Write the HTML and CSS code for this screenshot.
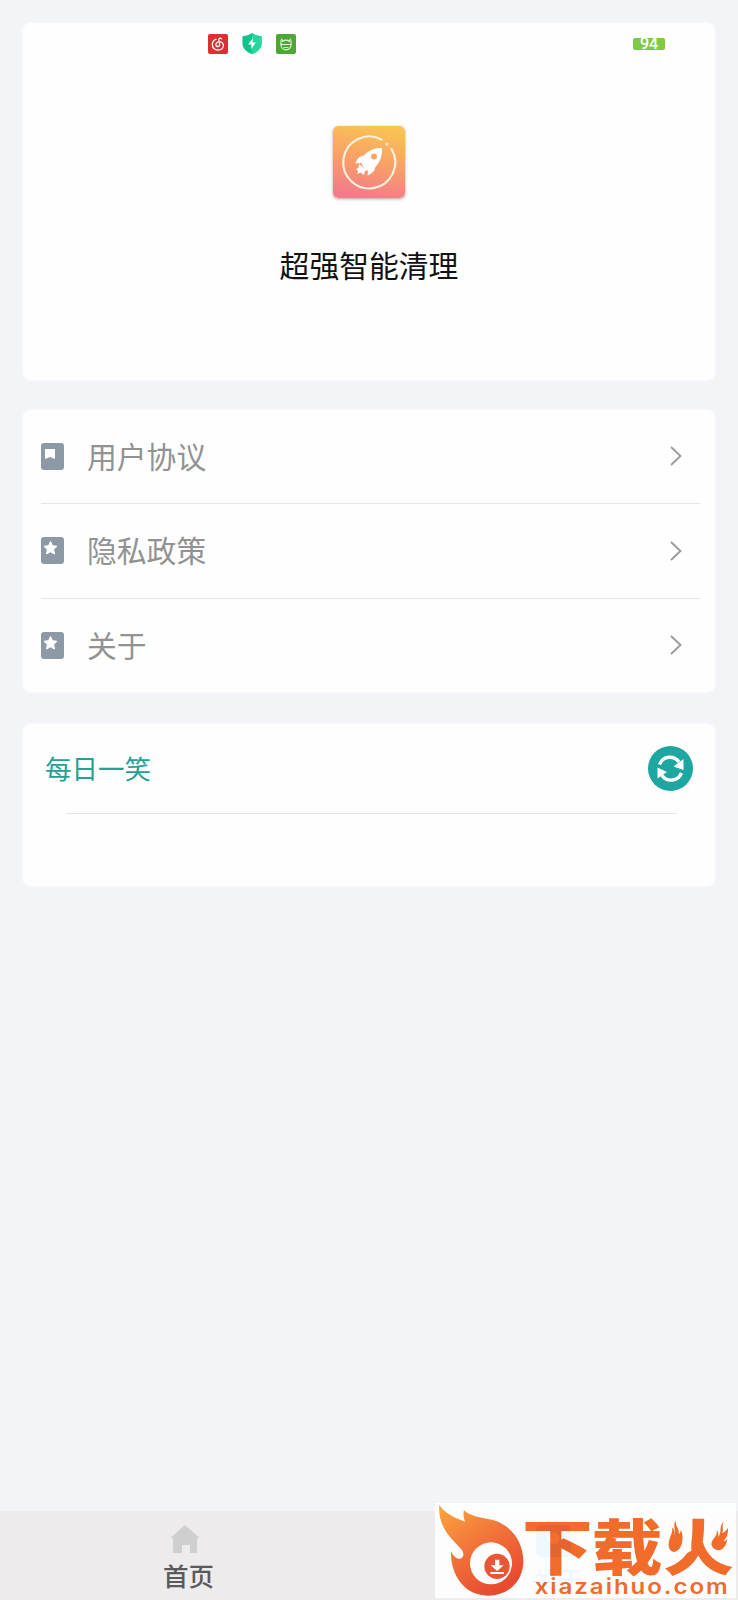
FILE: index.html
```
<!DOCTYPE html>
<html lang="zh-CN">
<head>
    <meta charset="UTF-8">
    <meta name="viewport" content="width=device-width, initial-scale=1.0">
    <title>超强智能清理</title>
    <link rel="stylesheet" href="styles.css">
</head>
<body>
    <main>
        <section class="card header">
            <div class="status-bar">
                <div class="status-icons">
                    <svg width="20" height="20" viewBox="0 0 20 20">
                        <rect width="20" height="20" rx="2" fill="#dc2f32"/>
                        <g fill="none" stroke="#fff" stroke-width="1.3" stroke-linecap="round">
                            <path d="M8 5.2C2.5 7.5 3.3 16 10 16c6.500 0 7.200-8 1.500-8.300C8 7.500 6.500 12 9.300 12.500c3.500.2 2.200-3 1.500-6.500-.2-1.800 1.500-2.300 2.700-1.300"/>
                        </g>
                    </svg>
                    <svg width="20" height="21" viewBox="0 0 20 22">
                        <path d="M10 0c3 2 6 3 10 3.300V11c0 5-4 9-10 11C4 20 0 16 0 11V3.300C4 3 7 2 10 0Z" fill="#12c48a"/>
                        <path d="M10 0c3 2 6 3 10 3.300V11c0 5-4 9-10 11Z" fill="#27d79c"/>
                        <path d="m11 5-5 7h3.500L9 17l5-7h-3.500Z" fill="#fff"/>
                    </svg>
                    <svg width="20" height="20" viewBox="0 0 20 20">
                        <rect width="20" height="20" rx="2" fill="#4fa637"/>
                        <g fill="none" stroke="#e4f6d8" stroke-width="1.100" stroke-linecap="round">
                            <path d="M5 10V6.500M15 10V6.500M6.500 7.500C8.500 6 11.500 6 13.500 7.500M5.500 5l1.500 2M14.500 5 13 7M4.500 10.500h11M5 11c0 6.500 10 6.500 10 0M8 13.500h4"/>
                        </g>
                    </svg>
                </div>
                <span class="battery">94</span>
            </div>
            <svg class="app-icon" width="72" height="72" viewBox="0 0 72 72">
                <defs>
                    <linearGradient id="app-bg" x1=".6" y1="0" x2=".4" y2="1">
                        <stop offset="0" stop-color="#f9c354"/>
                        <stop offset=".5" stop-color="#f9a067"/>
                        <stop offset="1" stop-color="#f27a8b"/>
                    </linearGradient>
                </defs>
                <rect width="72" height="72" rx="5" fill="url(#app-bg)"/>
                <path d="M48.500 13.500A26 26 0 1 0 58.500 23" fill="none" stroke="#fff1df" stroke-width="2.200" stroke-linecap="round"/>
                <circle cx="54" cy="18" r="1.800" fill="#fde0b8"/>
                <path fill="#fff" fill-rule="evenodd" d="M49 22c-8 0-14 2.500-18 7.500-4 .2-7 3-8.500 8l6-.5c1 3.500 3 6 6.500 7.500l-.5 5c5-2 7.500-5 7.800-8.500C47 36.500 49.500 30 49 22Zm-8 5.500a3 3 0 1 1 0 6 3 3 0 0 1 0-6Z"/>
                <path fill="#fff" d="m26 38-.5 3.500-2.500 2 2 1-.5 3.500 3-1.500 3.500 2.500 1-4 3-.5-4-2.500-3-2.500Z"/>
            </svg>
            <h1>超强智能清理</h1>
        </section>

        <section class="card menu">
            <a class="menu-row">
                <svg class="menu-icon" width="23" height="27" viewBox="0 0 23 27">
                    <rect width="23" height="27" rx="3" fill="#8d9aa5"/>
                    <path d="M4 6h10v10l-5-2-5 2Z" fill="#fff"/>
                </svg>
                <span>用户协议</span>
                <svg class="arrow" width="12" height="20" viewBox="0 0 12 20"><path d="m1 1 9.500 9L1 19"/></svg>
            </a>
            <a class="menu-row">
                <svg class="menu-icon" width="23" height="27" viewBox="0 0 23 27">
                    <rect width="23" height="27" rx="3" fill="#8d9aa5"/>
                    <path d="m9.500 4.500 2 4.200 4.500.6-3.300 3.200.8 4.500-4-2.200-4 2.200.8-4.500L3 9.300l4.500-.6Z" fill="#fff" stroke="#fff" stroke-linejoin="round"/>
                </svg>
                <span>隐私政策</span>
                <svg class="arrow" width="12" height="20" viewBox="0 0 12 20"><path d="m1 1 9.500 9L1 19"/></svg>
            </a>
            <a class="menu-row">
                <svg class="menu-icon" width="23" height="27" viewBox="0 0 23 27">
                    <rect width="23" height="27" rx="3" fill="#8d9aa5"/>
                    <path d="m9.500 4.500 2 4.200 4.500.6-3.300 3.200.8 4.500-4-2.200-4 2.200.8-4.500L3 9.300l4.500-.6Z" fill="#fff" stroke="#fff" stroke-linejoin="round"/>
                </svg>
                <span>关于</span>
                <svg class="arrow" width="12" height="20" viewBox="0 0 12 20"><path d="m1 1 9.500 9L1 19"/></svg>
            </a>
        </section>

        <section class="card joke">
            <div class="joke-head">
                <h2>每日一笑</h2>
                <svg width="45" height="45" viewBox="0 0 45 45">
                    <circle cx="22.500" cy="22.500" r="22.500" fill="#1ea6a1"/>
                    <g fill="none" stroke="#fff" stroke-width="3.400">
                        <path d="M11.500 18.500C15 9.500 26 9 31 16"/>
                        <path d="M33.500 27C30 35.500 19 36.500 14 29.500"/>
                    </g>
                    <path d="M35.500 13v11l-10-3.500ZM9.500 21.500v11L19 26Z" fill="#fff"/>
                </svg>
            </div>
            <hr>
        </section>
    </main>

    <nav class="tab-bar">
        <a class="tab">
            <svg width="28" height="28" viewBox="0 0 28 28"><path d="M14 0 28 12.500 26 14v14h-7v-8h-8v8H2V14l-2-1.500Z" fill="#cfcfcf"/></svg>
            <span>首页</span>
        </a>
        <a class="tab active">
            <svg width="35" height="32" viewBox="0 0 35 32"><rect width="35" height="32" rx="5" fill="#4a9de8"/><circle cx="17.500" cy="13" r="6" fill="#fff"/></svg>
            <span>关于</span>
        </a>
    </nav>

    <div class="site-logo">
        <svg width="301" height="95" viewBox="15 24 903 285">
            <defs>
                <linearGradient id="fire" x1="0" y1="0" x2=".6" y2="1">
                    <stop offset="0" stop-color="#fba22f"/>
                    <stop offset=".5" stop-color="#f36b2a"/>
                    <stop offset="1" stop-color="#e73d21"/>
                </linearGradient>
            </defs>
            <path fill="url(#fire)" d="M28 29C42 54 73 67 105 80c-4-13-6-23-3-34 18 18 45 20 76 27 65 13 102 66 102 126 0 60-45 103-106 103-66 0-113-55-111-134 6 16 18 25 28 23 11-3 12-16 3-28C70 135 22 100 28 29Z"/>
            <circle cx="183" cy="205" r="63" fill="#fff"/>
            <circle cx="201" cy="214" r="38" fill="#e94a27"/>
            <path fill="#fff" d="M195 194h13v17h13l-19.500 17-19.500-17h13ZM181 231h41v6h-41Z"/>
            <g class="logo-name">
                <text x="276" y="225" textLength="212" lengthAdjust="spacingAndGlyphs">下</text>
                <text x="485" y="225" textLength="212" lengthAdjust="spacingAndGlyphs">载</text>
                <text x="700" y="225" textLength="212" lengthAdjust="spacingAndGlyphs">火</text>
            </g>
            <path fill="#fff" d="M700 75h84v92l-22 12h-62ZM828 75h84v100h-46l-38-16Z"/>
            <g fill="#f2611b">
                <path d="M738 75c-4 17 9 24 9 42 5-3 6-9 5-15 13 28 3 66-21 69-16-2-18-24-12-40 4-12 10-20 7-34 8 7 9 17 6 26 8-15-6-31 6-48Z"/>
                <path d="M882 79c-9 14 1 22-6 35 7-1 13-8 18-16 1 22-6 34-14 40 6 0 9-3 12-7-3 20-12 33-26 35-19-2-26-17-19-29 4-9 16-16 13-31 6 6 6 14 4 20 14-13 0-31 18-47Z"/>
            </g>
            <text class="logo-url" x="314" y="296" textLength="585" lengthAdjust="spacingAndGlyphs">xiazaihuo.com</text>
        </svg>
    </div>
</body>
</html>
```
FILE: styles.css
```
* {
    box-sizing: border-box;
}

body {
    margin: 0;
    min-height: 1600px;
    display: flex;
    flex-direction: column;
    position: relative;
    font-family: "Noto Sans CJK SC", sans-serif;
    background-color: #f2f4f8;
}

svg {
    display: block;
    flex-shrink: 0;
}

main {
    flex: 1;
    display: flex;
    flex-direction: column;
    padding: 23px 23px 0;
}

.card {
    background: #fefefe;
    border-radius: 8px;
    box-shadow: 0 0 4px rgba(255, 255, 255, 0.8);
}

.header {
    height: 357px;
    margin-bottom: 30px;
    display: flex;
    flex-direction: column;
    align-items: center;
}

.status-bar {
    width: 100%;
    height: 41px;
    padding: 0 50px 0 185px;
    display: flex;
    justify-content: space-between;
    align-items: center;
}

.status-icons {
    display: flex;
    align-items: center;
    gap: 14px;
}

.battery {
    width: 32px;
    height: 12px;
    border-radius: 2px;
    background-color: #7fca45;
    color: #fff;
    font: 500 16px/12px Roboto, sans-serif;
    text-align: center;
}

.app-icon {
    margin-top: 62px;
    border-radius: 5px;
    box-shadow: 0 1px 3px rgba(120, 60, 60, 0.5);
}

h1 {
    margin: 44px 0 0;
    font-size: 29.800px;
    line-height: 44px;
    font-weight: 400;
    color: #111;
}

.menu {
    height: 282px;
    margin-bottom: 32px;
    padding: 0 15px 0 18px;
}

.menu-row {
    height: 94.500px;
    display: flex;
    align-items: center;
    font-size: 29.800px;
    color: #929292;
}

.menu-row:first-child {
    height: 93px;
    padding-bottom: 1px;
}

.menu-row + .menu-row {
    border-top: 1px solid #e6e6e8;
}

.menu-row span {
    padding-bottom: 3px;
}

.menu-icon {
    margin-right: 23px;
}

.arrow {
    margin: 0 18px 0 auto;
    fill: none;
    stroke: #999;
    stroke-width: 1.8;
}

.joke {
    height: 162px;
}

.joke-head {
    height: 89px;
    padding: 0 22px 1px;
    display: flex;
    align-items: center;
    justify-content: space-between;
}

h2 {
    margin: 0;
    padding-bottom: 1px;
    font-size: 26.500px;
    font-weight: 400;
    color: #26a092;
}

hr {
    height: 1px;
    margin: 0 38px 0 43px;
    border: none;
    background-color: #e6e6e6;
}

.tab-bar {
    height: 89px;
    display: flex;
    background-color: #edebec;
}

.tab {
    flex: 1;
    display: flex;
    flex-direction: column;
    align-items: center;
    padding-top: 14px;
    font-size: 25.500px;
    line-height: 38px;
    font-weight: 500;
    color: #5a5a5a;
}

.tab span {
    margin: 3px 0 0 8px;
}

.tab.active {
    color: #4a9de8;
}

/* site logo lies over the tab bar */
.site-logo {
    position: absolute;
    left: 435px;
    top: 1503px;
    background: #fff;
    opacity: 0.92;
}

.site-logo svg {
    overflow: visible;
}

.logo-name text {
    font-size: 182px;
    font-weight: 900;
    fill: #f2611b;
}

.logo-url {
    font-family: Inter, sans-serif;
    font-size: 62px;
    font-weight: 600;
    letter-spacing: 5px;
    fill: #f2611b;
}
```
